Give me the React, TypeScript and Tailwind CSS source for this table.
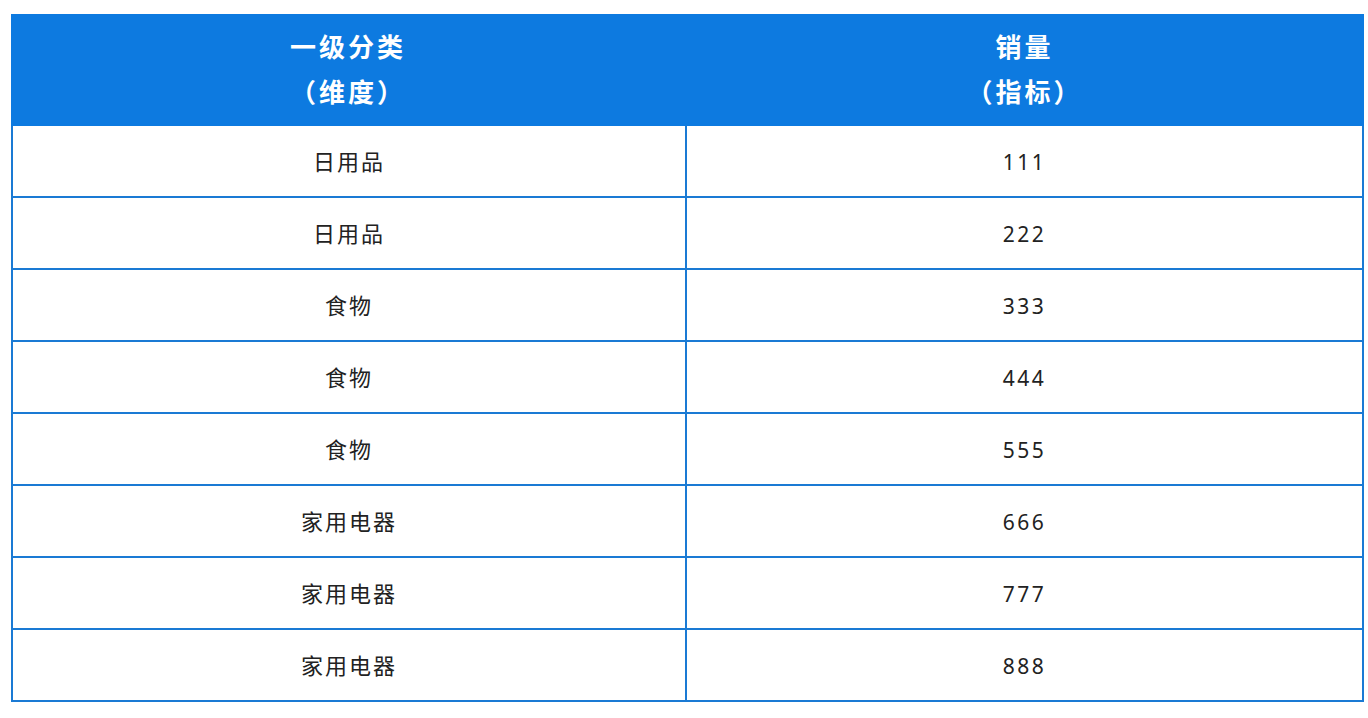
import React from "react";

const rows: [string, string][] = [
  ["日用品", "111"],
  ["日用品", "222"],
  ["食物", "333"],
  ["食物", "444"],
  ["食物", "555"],
  ["家用电器", "666"],
  ["家用电器", "777"],
  ["家用电器", "888"],
];

export default function App() {
  return (
    <div
      className="min-h-[718px] bg-white pl-[11px] pt-[14px]"
      style={{ fontFamily: '"Noto Sans", "Noto Sans CJK SC", sans-serif' }}
    >
      <div className="w-[1353px] border-x-2 border-[#1a7ad4]">
        <div className="grid h-[112px] grid-cols-[672px_2px_1fr] bg-[#0d7ae0] -mx-[2px]">
          <div className="col-start-1 ml-[2px] flex flex-col items-center justify-center text-[26px] font-bold leading-[45px] tracking-[3px] text-white">
            <span>一级分类</span>
            <span>（维度）</span>
          </div>
          <div />
          <div className="flex flex-col items-center justify-center text-[26px] font-bold leading-[45px] tracking-[3px] text-white">
            <span>销量</span>
            <span>（指标）</span>
          </div>
        </div>
        {rows.map(([a, b], i) => (
          <div
            key={i}
            className="grid h-[72px] grid-cols-[672px_2px_1fr] border-b-2 border-[#1a7ad4]"
          >
            <div className="flex items-center justify-center text-[22px] tracking-[2px] text-[#222]">
              {a}
            </div>
            <div className="bg-[#1a7ad4]" />
            <div className="flex items-center justify-center pt-[3px] text-[21px] tracking-[2.5px] text-[#222]">
              {b}
            </div>
          </div>
        ))}
      </div>
    </div>
  );
}
